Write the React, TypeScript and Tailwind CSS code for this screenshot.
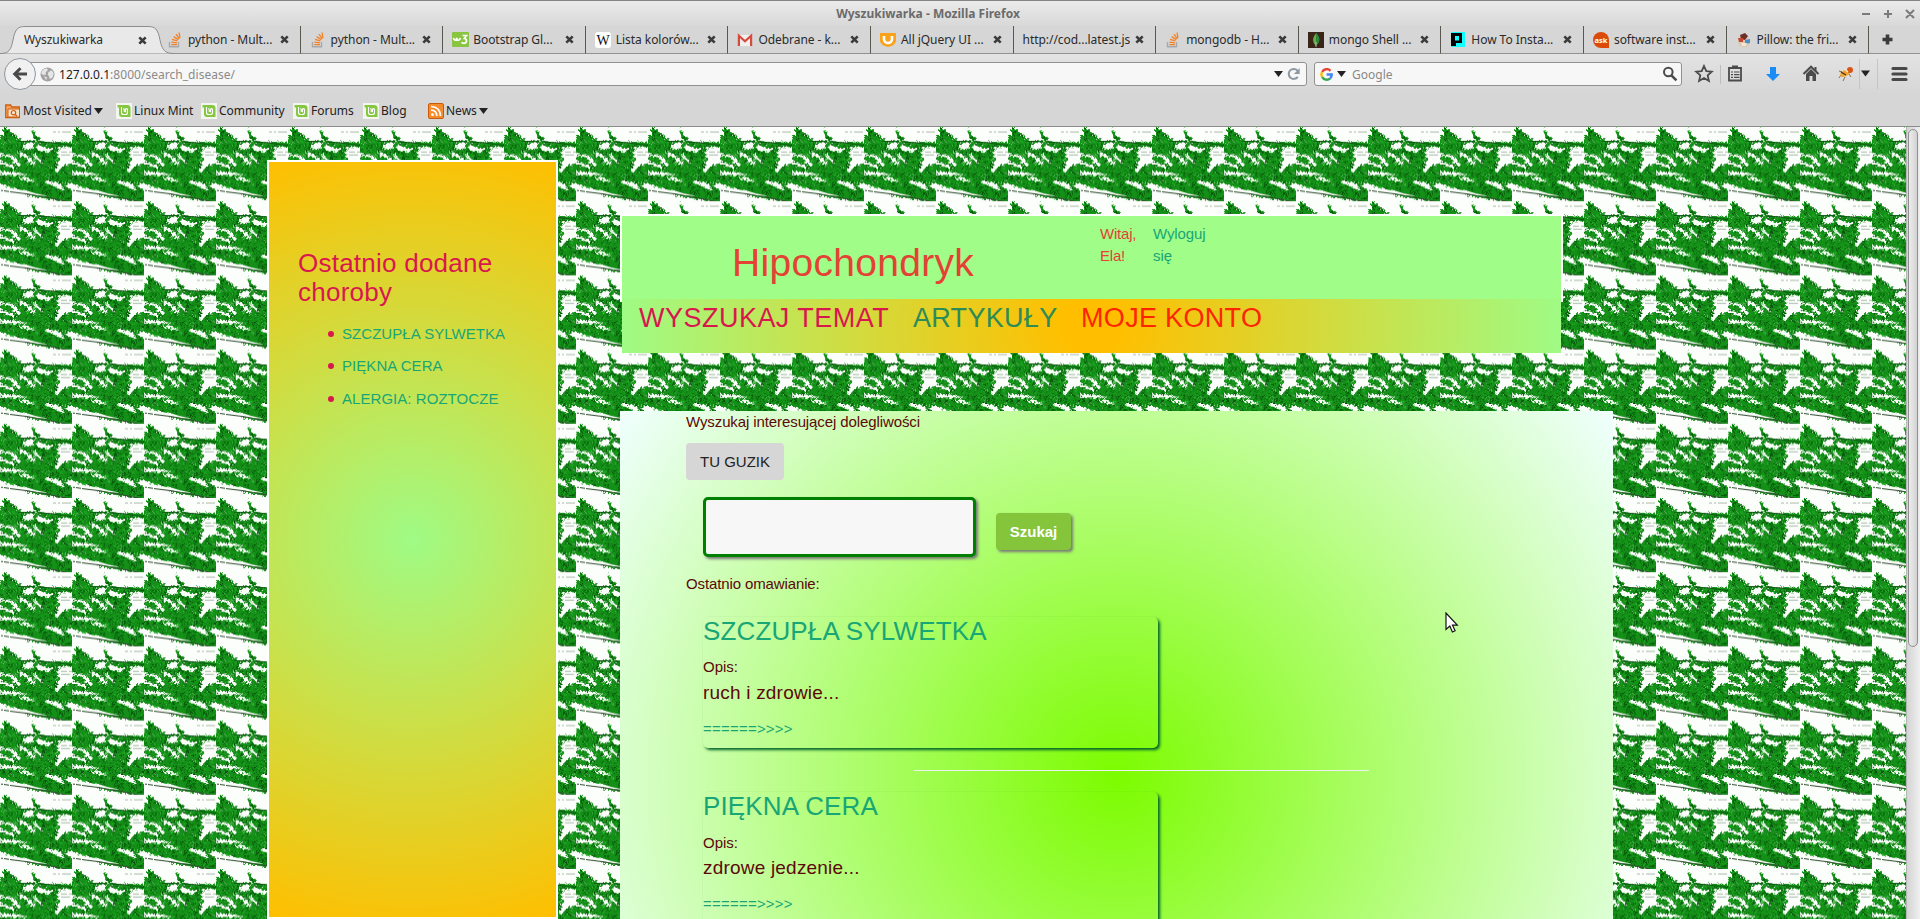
import React from "react";

type IconProps = { className?: string };

const Caret = ({ className = "" }: IconProps) => (
  <svg className={`shrink-0 ${className}`} width="9" height="6" viewBox="0 0 9 6"><path d="M0 0H9L4.5 6Z" fill="#222" /></svg>
);
const Close = () => (
  <svg className="shrink-0" width="9" height="9" viewBox="0 0 9 9"><path d="M1.3 1.3 7.7 7.7M7.7 1.3 1.3 7.7" stroke="#3b3b3b" strokeWidth="2.6" /></svg>
);
const StackIcon = () => (
  <svg width="16" height="16" viewBox="0 0 16 16" fill="none">
    <path d="M2.5 10v4.7h9V10" stroke="#a4a8ad" strokeWidth="1.4" />
    <path d="M4.3 12.6h5.6M4.4 10.2l5.5.7M5 7.4l5.4 1.5M6.6 4.6l4.7 3M9 2.2l3.4 4.6M12 .5l1 5.3" stroke="#f48024" strokeWidth="1.3" />
  </svg>
);
const W3Icon = () => (
  <svg width="17" height="16" viewBox="0 0 17 16" fill="none">
    <rect width="17" height="15" rx="1" fill="#8ac541" />
    <path d="M1.5 6c.6 3 2.5 3 3.3 0 .7 3 2.8 3 3.6 0M10.5 3.5h4l-2.2 3c3 .3 3 4.8-.4 4.8-1 0-1.8-.4-2.3-1.1" stroke="#fff" strokeWidth="1.7" />
  </svg>
);
const WikiIcon = () => (
  <svg width="16" height="16" viewBox="0 0 16 16"><rect width="16" height="16" rx="3" fill="#fff" />
    <text x="8" y="13" textAnchor="middle" fontFamily="Liberation Serif, serif" fontSize="14" fill="#111">W</text></svg>
);
const GmailIcon = () => (
  <svg width="16" height="16" viewBox="0 0 16 16"><rect x="1" y="3" width="14" height="11" fill="#f2f0ee" /><path d="M1.9 14V3.7L8 9.3l6.1-5.6V14" fill="none" stroke="#d64a3d" strokeWidth="2.2" /></svg>
);
const JqIcon = () => (
  <svg width="16" height="16" viewBox="0 0 16 16"><path d="M0 1h16v8.5Q14 14 8 15 2 14 0 9.5Z" fill="#fba21b" /><path d="M4 4v3a4 4 0 0 0 8 0V4" fill="none" stroke="#fff" strokeWidth="2.6" /></svg>
);
const MongoIcon = () => (
  <svg width="16" height="16" viewBox="0 0 16 16"><rect width="16" height="16" fill="#3b2418" /><path d="M8.5 1C3.5 6 4.5 11 8 13.5Z" fill="#6cac48" /><path d="M8.2 1c5 5 3.7 10-.2 12.5Z" fill="#2e8b3d" /><path d="M8 10v5" stroke="#b9c7a8" /></svg>
);
const DoIcon = () => (
  <svg width="16" height="16" viewBox="0 0 16 16"><path d="M1 0h14v15H1Z" fill="#1ff" /><path d="M1 1h11v10H6v3H1Z" fill="#000" /><rect x="5" y="4" width="4" height="4.500" fill="#1ff" /></svg>
);
const AskIcon = () => (
  <svg width="16" height="16" viewBox="0 0 16 16"><path d="M8 0a8 8 0 1 0 0 16h8V8A8 8 0 0 0 8 0Z" fill="#dd4b0a" />
    <text x="7.9" y="11" textAnchor="middle" fontFamily="Noto Sans, sans-serif" fontWeight="700" fontSize="7.5" fill="#fff">ask</text></svg>
);
const PillowIcon = () => (
  <svg width="16" height="16" viewBox="0 0 16 16"><circle cx="8" cy="9.5" r="6" fill="#dcc9b4" /><path d="M4 3l5-2 3 3-3 4-4-1Z" fill="#6d2f2a" /><path d="M2 6h5v4H3Z" fill="#c94631" /><path d="M9 8l5-1v4l-5 1Z" fill="#4b8fc4" /><path d="M5 11h6l-1 3H6Z" fill="#f2e6d0" /></svg>
);
const MintIcon = () => (
  <svg className="shrink-0" width="16" height="16" viewBox="0 0 16 16" fill="none"><rect width="16" height="16" fill="#f2f6ee" /><path d="M1.5 2H11q3.5 0 3.5 3v9H6Q3 14 3 11V4.5H1.5Z" fill="#85c742" /><path d="M5.5 4v5.5q0 2 2 2h2q2 0 2-2V6.8q0-1.2-1-1.2t-1 1.2v2.4M8.3 9V6.8q0-1.2-1-1.2" stroke="#fff" strokeWidth="1.1" /></svg>
);
const FolderIcon = () => (
  <svg className="shrink-0" width="16" height="16" viewBox="0 0 16 16" fill="none"><path d="M.7 2h5l1 2h7.6v10.5H.7Z" fill="#f3a35a" stroke="#cf5f10" strokeWidth="1.3" /><path d="M3 6h11.5v8H3Z" fill="#fbe3c8" stroke="#cf5f10" /><circle cx="8.5" cy="9.7" r="2.2" stroke="#cf5f10" strokeWidth="1.2" /><path d="M10 11.3l2 2" stroke="#cf5f10" strokeWidth="1.3" /></svg>
);
const RssIcon = () => (
  <svg className="shrink-0" width="16" height="16" viewBox="0 0 16 16" fill="none"><rect x=".5" y=".5" width="15" height="15" rx="1.5" fill="#f58b2b" stroke="#c85a0c" /><circle cx="4.5" cy="11.7" r="1.4" fill="#fff" /><path d="M3 7.2q5.6 0 5.8 5.8M3 3.5q9 .3 9.5 9.5" stroke="#fff" strokeWidth="1.7" /></svg>
);
const GlobeIcon = () => (
  <svg className="shrink-0" width="15" height="15" viewBox="0 0 15 15"><circle cx="7.5" cy="7.5" r="7" fill="#a3a3a3" /><path d="M2 4q2-2.5 4.5-2.7L8 3 5.5 5.6 6 7.5 3.5 8 1.2 6.6ZM8.5 5l3.2-1.8 2 3-1 4-2.6 2L9 9.5 7.8 7.6ZM4 9.3l3 1-.8 3Z" fill="#e6e6e6" /></svg>
);
const GoogleIcon = () => (
  <svg className="shrink-0" width="13" height="13" viewBox="0 0 13 13" fill="none" strokeWidth="2.4"><path d="M10.5 2.8A5.2 5.2 0 0 0 2.1 4" stroke="#ea4335" /><path d="M2.1 4a5.3 5.3 0 0 0 0 5" stroke="#fbbc05" /><path d="M2.1 9a5.2 5.2 0 0 0 8.1 1.3" stroke="#34a853" /><path d="M10.2 10.3a5 5 0 0 0 1.5-3.8H6.6" stroke="#4285f4" /></svg>
);

const tabs: { label: string; icon: React.ReactNode }[] = [
  { label: "python - Mult...", icon: <StackIcon /> },
  { label: "python - Mult...", icon: <StackIcon /> },
  { label: "Bootstrap Gl...", icon: <W3Icon /> },
  { label: "Lista kolorów...", icon: <WikiIcon /> },
  { label: "Odebrane - k...", icon: <GmailIcon /> },
  { label: "All jQuery UI ...", icon: <JqIcon /> },
  { label: "http://cod...latest.js", icon: null },
  { label: "mongodb - H...", icon: <StackIcon /> },
  { label: "mongo Shell ...", icon: <MongoIcon /> },
  { label: "How To Insta...", icon: <DoIcon /> },
  { label: "software inst...", icon: <AskIcon /> },
  { label: "Pillow: the fri...", icon: <PillowIcon /> },
];

function TitleBar() {
  return (
    <div className="flex h-[26px] items-center border-t border-[#858585] bg-gradient-to-b from-[#ebebeb] to-[#d8d8d8]">
      <div className="flex-1 pl-[16px] text-center text-[12px] font-bold text-[#6b6b6b]">Wyszukiwarka - Mozilla Firefox</div>
      <svg width="80" height="20" viewBox="0 0 80 20" stroke="#7b7b7b" strokeWidth="2" fill="none">
        <path d="M22 10h8M44 10h8M48 6v8M66 6l8 8M74 6l-8 8" />
      </svg>
    </div>
  );
}

function TabBar() {
  return (
    <div className="flex h-[28px] bg-[#d6d6d6] text-[12px] text-[#2a2a2a]">
      <div className="relative flex w-[158px] shrink-0 items-center justify-between pl-6 pr-[11px]">
        <svg className="absolute left-0 top-0" width="174" height="28" viewBox="0 0 174 28">
          <path d="M0 27.5C9 27.5 11 24 13 14 15 3 18 .5 25 .5H148C155 .5 158 3 160 14 162 24 165 27.5 174 27.5V28H0Z" fill="#e9e9e9" stroke="#8d8d8d" />
        </svg>
        <span className="relative tracking-[-0.08px]">Wyszukiwarka</span>
        <span className="relative"><Close /></span>
      </div>
      {tabs.map((t, i) => (
        <div key={i} className="flex w-[142.6px] shrink-0 items-center border-b border-r border-b-[#929292] border-r-[#5a5650] pl-[9px] pr-[11px]">
          {t.icon && <span className="mr-[5px] w-4 shrink-0">{t.icon}</span>}
          <span className="flex-1 whitespace-nowrap tracking-[-0.05px]">{t.label}</span>
          <Close />
        </div>
      ))}
      <div className="flex flex-1 items-center border-b border-[#929292] pl-[13px]">
        <svg width="11" height="11" viewBox="0 0 11 11"><path d="M5.5 0.5v10M.5 5.5h10" stroke="#3b3b3b" strokeWidth="3.6" /></svg>
      </div>
    </div>
  );
}

function NavBar() {
  return (
    <div className="flex h-[40px] items-center bg-gradient-to-b from-[#e3e3e3] to-[#d6d6d6]">
      <div className="relative z-10 ml-1 flex h-8 w-8 shrink-0 items-center justify-center rounded-full border border-[#8d96a0] bg-[#f1f1f1]">
        <svg width="16" height="16" viewBox="0 0 16 16" fill="none" stroke="#4a4a4a" strokeWidth="3"><path d="M15 8H3.5M8.5 2.2 2.7 8l5.8 5.8" /></svg>
      </div>
      <div className="-ml-2 flex h-6 w-[1279px] shrink-0 items-center rounded-r-[3px] border border-[#919191] bg-[#f7f7f7] pl-[11px] pr-[5px] text-[12px]">
        <GlobeIcon />
        <div className="ml-[4px] flex-1 pt-[1px] tracking-[0.03px] text-[#8a8a8a]"><span className="text-[#222]">127.0.0.1</span>:8000/search_disease/</div>
        <Caret />
        <svg className="ml-1" width="14" height="14" viewBox="0 0 14 14" fill="none"><path d="M10.8 9.8A5 5 0 1 1 10.5 3.6" stroke="#8e98a2" strokeWidth="2" /><path d="M12.7 1v6H6.9Z" fill="#8e98a2" /></svg>
      </div>
      <div className="ml-[7px] flex h-6 w-[368px] shrink-0 items-center rounded-[3px] border border-[#919191] bg-[#f7f7f7] pl-[5px] pr-[3px] text-[12px] text-[#888]">
        <GoogleIcon />
        <Caret className="ml-[4px]" />
        <span className="ml-[6px] flex-1 pt-[1px]">Google</span>
        <svg width="16" height="16" viewBox="0 0 16 16" fill="none" stroke="#4a4a4a"><circle cx="6.3" cy="6" r="4.3" strokeWidth="2" /><path d="m9.4 9.3 5 5" strokeWidth="2.6" /></svg>
      </div>
      <svg className="shrink-0" width="238" height="40" viewBox="0 0 238 40" fill="none">
        <path d="m22 12 2.3 5.1 5.5.6-4.1 3.7 1.2 5.5-4.9-2.900-4.900 2.900 1.200-5.500-4.100-3.700 5.500-.6Z" stroke="#4b4b4b" strokeWidth="1.8" />
        <path d="M38.5 11v19" stroke="#bdbdbd" />
        <path d="M47 14h12v12.500H47Z" stroke="#4b4b4b" strokeWidth="1.8" /><path d="M50 11.500h6V15h-6Z" fill="#4b4b4b" /><path d="M49 18h2M52 18h5.500M49 20.700h2M52 20.700h5.500M49 23.400h2M52 23.400h5.500" stroke="#4b4b4b" strokeWidth="1.2" />
        <path d="M88 13h6v7h4l-7 7-7-7h4Z" fill="#1b8cf5" />
        <path d="m121.5 20 7.500-7.300 7.500 7.300" stroke="#4b4b4b" strokeWidth="2" /><path d="m124 20 5-5 5 5v7h-3.500v-5h-3v5H124ZM132.500 13h2v4h-2Z" fill="#4b4b4b" />
        <path d="m159 21-2 3M163 23l-2 4M167 20l2 3M160 18l-3-1" stroke="#6d5133" strokeWidth=".8" /><ellipse cx="163.500" cy="19" rx="6" ry="3" transform="rotate(-30 163.500 19)" fill="#efa534" /><circle cx="168" cy="16" r="3" fill="#d8541a" /><path d="m159 18 5 3" stroke="#5b2c10" strokeWidth="1.400" /><path d="m163 15 3 3" stroke="#fff0c8" strokeWidth="1.200" />
        <path d="M177.500 5v30M195.500 5v30" stroke="#c2c6cb" /><path d="M179 16.500h9l-4.500 6Z" fill="#222" />
        <path d="M211 14.500h13M211 20h13M211 25.500h13" stroke="#484848" strokeWidth="3.200" strokeLinecap="round" />
      </svg>
    </div>
  );
}

function Bookmarks() {
  const b = "flex items-center gap-[2px] whitespace-nowrap";
  return (
    <div className="flex h-[33px] items-center border-b border-[#8c8c8c] bg-[#d6d6d6] pl-[5px] pt-[1px] text-[12px] text-[#222]">
      <div className={b + " w-[111px]"}><FolderIcon /><span>Most Visited</span><Caret /></div>
      <div className={b + " w-[85px]"}><MintIcon /><span>Linux Mint</span></div>
      <div className={b + " w-[92px]"}><MintIcon /><span>Community</span></div>
      <div className={b + " w-[70px]"}><MintIcon /><span>Forums</span></div>
      <div className={b + " w-[65px]"}><MintIcon /><span>Blog</span></div>
      <div className={b}><RssIcon /><span>News</span><Caret /></div>
    </div>
  );
}

// Small seeded generator so the foliage texture is the same on every load.
function speckles(count: number, seed: number, w: number, h: number) {
  let s = seed;
  const next = () => {
    s = (s * 16807) % 2147483647;
    return s / 2147483647;
  };
  let d = "";
  for (let i = 0; i < count; i++) {
    const x = next() * w, y = next() * h, l = 0.8 + next() * 1.6;
    d += `M${x.toFixed(1)} ${y.toFixed(1)}l${l.toFixed(1)} ${(next() * 1.6 - 0.5).toFixed(1)}`;
  }
  return d;
}

function Foliage() {
  return (
    <svg className="absolute left-0 top-0" width="1906" height="792">
      <defs>
        <clipPath id="leafy">
          <path d="M-4 12 2 11 0 8 3 8 3 3 5 0 7 3 10 2 10 6 14 5 13 9 18 8 16 12 22 11 19 14 36 14 34 10 32 6 30.500 1 34 4 36 8 38 11 41 9 40 13.500 46 15 76 15.500V20L56 20 60 23 57 25 60 28 57 29 61 32 56 36 60 39 56 42 55 46 59 44 60 40 64 37 67 38 76 34V57L66 57 76 63V77L53 73 38 70 24 68 30 65 20 63 10 60 -4 56Z" />
        </clipPath>
        <filter id="needles" x="-8" y="-4" width="90" height="86" filterUnits="userSpaceOnUse" colorInterpolationFilters="sRGB">
          <feTurbulence type="fractalNoise" baseFrequency="0.4" numOctaves="2" seed="7" result="n" />
          <feDisplacementMap in="SourceGraphic" in2="n" scale="6" xChannelSelector="R" yChannelSelector="G" />
        </filter>
        <pattern id="fir" width="72" height="74.2" patternUnits="userSpaceOnUse">
          <rect width="72" height="75" fill="#fcfefb" />
          <g filter="url(#needles)">
            <g clipPath="url(#leafy)">
              <rect x="-4" width="80" height="78" fill="#149018" />
              <path d={speckles(520, 71, 74, 76)} stroke="#075c0b" strokeWidth="1.100" />
              <path d={speckles(300, 999, 74, 76)} stroke="#1fae22" strokeWidth="1" />
              <path d={speckles(170, 4242, 74, 76)} stroke="#043a08" strokeWidth=".9" />
              <path d={speckles(80, 313, 74, 60)} stroke="#a5dca4" strokeWidth=".7" />
            </g>
            <g fill="#fbfefa">
              <path d="M22 18 29 15.500 34 16 34 20 30 24 27 21 22 24 25 20Z" />
              <path d="M36 18 40 17 41 21 46 19.500 45 23 50 20.500 54 22 48 26 43 23 42 27 39 23Z" />
              <path d="M-4 25 5 28 9 27 14 30 19 35 21 39 15 37 11 32 7 30 -4 29Z" />
              <path d="M17 25 24 26 29 29 33 34 36 40 29 35 26 31 22 29Z" />
              <path d="M32 26 37 29 43 37 37 33Z" />
              <path d="M-4 32 6 36 12 38 18 41.500 9 40 -4 36Z" />
              <path d="M-4 44 8 44.500 15 45 28 48 20 49 12 48 -4 47Z" />
              <path d="M17 50 28 51.500 35 54 28 54.500 22 53Z" />
              <path d="M45 53.500 52 54.500 58 56 63 60 65 64 57 61 52 57.500 46 57Z" />
              <path d="M65 59 76 54V64Z" />
              <path d="M55 44 58 37 64 32.500 76 30.500 76 35.500 66 37 61 41 58 46Z" />
              <path d="M59 21H76V24.500H60ZM60 25.500H76V27.500H61ZM59 29H76V31H63Z" />
            </g>
          </g>
          <path d="M0 60 8 61 18 62.500 28 64 36 66.500 48 69 38 68.500 27 67 15 65 0 63Z" fill="#fbfefa" />
          <path d="M53 5h3m2 0h2m2 0h9M61 25h6m2 0h3M61 28h9" stroke="#6f8a71" strokeWidth=".6" />
          <path d="M1 63.500h2m1 .3 5 .7m1 .2 10 1.300 8 1 9 1.800 12 2 20 4" stroke="#2f4a30" strokeWidth="1" fill="none" />
          <path d="M18 14.500h17M40 15l13 1 19 2.500" stroke="#0a5a10" strokeWidth="1.200" fill="none" />
        </pattern>
      </defs>
      <rect width="1906" height="792" fill="url(#fir)" />
    </svg>
  );
}

function Sidebar() {
  return (
    <aside className="relative ml-[267px] mt-[33px] h-[759px] w-[291px] shrink-0 border-2 border-white bg-[radial-gradient(circle_at_center,#9ffb85,#ffbf00)] px-[29px] pt-[87px]">
      <h3 className="text-[26px] leading-[29px] tracking-[0.24px] text-[#d9174f]">Ostatnio dodane choroby</h3>
      <ul className="mt-[16px] flex flex-col gap-[11px] pl-[30px] text-[15px] leading-[21.400px] tracking-[0.05px] text-[#18a676]">
        {["SZCZUPŁA SYLWETKA", "PIĘKNA CERA", "ALERGIA: ROZTOCZE"].map((t) => (
          <li key={t} className="flex items-center gap-[8px] whitespace-nowrap">
            <span className="h-[6px] w-[6px] rounded-full bg-[#d9174f]" />{t}
          </li>
        ))}
      </ul>
    </aside>
  );
}

function Header() {
  return (
    <header className="h-[139px] w-[943px]">
      <div className="flex h-[88px] border-2 border-white bg-[#a0fd88] pl-[110px] text-[15px] leading-[22px]">
        <h1 className="w-[368px] pt-[27px] text-[39px] leading-[40px] tracking-[0.3px] text-[#e34234]">Hipochondryk</h1>
        <p className="w-[53px] pt-[7px] tracking-[-0.2px] text-[#e34234]">Witaj,<br />Ela!</p>
        <p className="pt-[7px] tracking-[-0.1px] text-[#18a676]">Wyloguj<br />się</p>
      </div>
      <nav className="relative mx-[2px] -mt-[3px] flex h-[54px] bg-[radial-gradient(circle_at_center,#ffbf00_6%,#9ffb85)] pl-[17px] pt-[1px] text-[27px] leading-[37px]">
        <span className="w-[274px] tracking-[0.48px] text-[#d9174f]">WYSZUKAJ TEMAT</span>
        <span className="w-[168px] tracking-[0.3px] text-[#2e8b57]">ARTYKUŁY</span>
        <span className="tracking-[0.32px] text-[#ff2400]">MOJE KONTO</span>
      </nav>
    </header>
  );
}

type CardProps = { title: string; text: string };

function Card({ title, text }: CardProps) {
  return (
    <article className="relative ml-[17px] h-[131px] w-[455px] rounded-[5px] text-[15px] leading-[21.400px] shadow-[2px_2px_3px_#006428]">
      <h3 className="text-[26px] leading-[28.600px] tracking-[0.14px] text-[#18a676]">{title}</h3>
      <p className="mt-[10.600px]">Opis:</p>
      <p className="mt-[1px] text-[19px] leading-[27px] tracking-[0.2px]">{text}</p>
      <p className="mt-[12.400px] tracking-[0.22px] text-[#18a676]">{"======>>>>"}</p>
    </article>
  );
}

function Panel() {
  return (
    <section className="mt-[58px] h-[732px] w-[993px] bg-[radial-gradient(circle_at_center,#7cfc00,#f0ffff)] pl-[66px] text-[15px] leading-[21.400px] text-[#5c0808]">
      <p className="tracking-[-0.1px]">Wyszukaj interesującej dolegliwości</p>
      <button className="mt-[10.600px] block h-[37px] w-[98px] rounded-[4px] bg-[#d6d6d6] text-[#222]">TU GUZIK</button>
      <div className="ml-[17px] mt-[17px] flex h-[60px]">
        <input className="h-[60px] w-[273px] rounded-[5px] border-[3px] border-[#008000] bg-[#f7f7f7] shadow-[2px_2px_3px_#777]" />
        <button className="ml-5 mt-4 h-[37px] w-[75px] rounded-[4px] bg-[#84c53c] font-bold text-white shadow-[2px_2px_3px_#777]">Szukaj</button>
      </div>
      <p className="mb-[22.600px] mt-[16px] tracking-[-0.12px]">Ostatnio omawianie:</p>
      <Card title="SZCZUPŁA SYLWETKA" text="ruch i zdrowie..." />
      <hr className="mb-[21.400px] ml-[228px] mt-[22px] w-[455px] border-t border-[#ecf0f1]" />
      <Card title="PIĘKNA CERA" text="zdrowe jedzenie..." />
    </section>
  );
}

export default function App() {
  return (
    <div className="h-[919px] w-[1920px] overflow-hidden bg-[#d6d6d6] font-['Noto_Sans',sans-serif]">
      <TitleBar />
      <TabBar />
      <NavBar />
      <Bookmarks />
      <div className="relative flex h-[792px] overflow-hidden font-['Liberation_Sans',sans-serif]">
        <Foliage />
        <Sidebar />
        <main className="relative ml-[62px] mt-[87px]">
          <Header />
          <Panel />
        </main>
        <div className="relative ml-auto h-[792px] w-[14px] border-l border-[#b5b5b5] bg-gradient-to-r from-[#d4d4d4] to-[#f0f0f0] px-[1px] pt-[2px]">
          <div className="h-[518px] w-[10px] rounded-[5px] border border-[#8f8f8f] bg-gradient-to-r from-[#ececec] to-[#d2d2d2]" />
        </div>
        <svg className="absolute left-[1445px] top-[485px]" width="14" height="22" viewBox="0 0 14 22"><path d="M1 1v16.500l3.800-3.500 2.600 6 2.700-1.200-2.600-5.600h4.800Z" fill="#fff" stroke="#111" strokeWidth="1.200" /></svg>
      </div>
    </div>
  );
}
